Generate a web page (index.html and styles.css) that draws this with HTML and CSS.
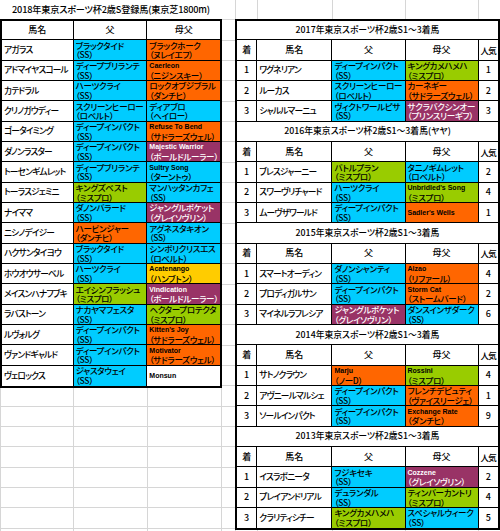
FILE: index.html
```html
<!DOCTYPE html>
<html lang="ja">
<head>
<meta charset="utf-8">
<title>2018年東京スポーツ杯2歳S登録馬</title>
<link rel="stylesheet" href="styles.css">
</head>
<body>
<div class="sheet">
  <div class="left">
    <div class="left-title">2018年東京スポーツ杯2歳S登録馬(東京芝1800m)</div>
    <table class="reg">
      <colgroup><col class="lw1"><col class="lw2"><col class="lw3"></colgroup>
      <tr class="hd"><th>馬名</th><th>父</th><th>母父</th></tr>
      <tr><td class="nm">アガラス</td><td class="s c"><div>ブラックタイド<br>（SS）</div></td><td class="s o"><div>ブラックホーク<br>（ヌレイエフ）</div></td></tr>
      <tr><td class="nm">アドマイヤスコール</td><td class="s c"><div>ディープブリランテ<br>（SS）</div></td><td class="s o"><div><span class="en">Caerleon</span><br>（ニジンスキー）</div></td></tr>
      <tr><td class="nm">カテドラル</td><td class="s c"><div>ハーツクライ<br>（SS）</div></td><td class="s o"><div>ロックオブジブラル<br>（ダンチヒ）</div></td></tr>
      <tr><td class="nm">クリノガウディー</td><td class="s c"><div>スクリーンヒーロー<br>（ロベルト）</div></td><td class="s c"><div>ディアブロ<br>（ヘイロー）</div></td></tr>
      <tr><td class="nm">ゴータイミング</td><td class="s c"><div>ディープインパクト<br>（SS）</div></td><td class="s o"><div><span class="en">Refuse To Bend</span><br>（サドラーズウェル）</div></td></tr>
      <tr><td class="nm">ダノンラスター</td><td class="s c"><div>ディープインパクト<br>（SS）</div></td><td class="s p"><div><span class="en">Majestic Warrior</span><br>（ボールドルーラー）</div></td></tr>
      <tr><td class="nm">トーセンギムレット</td><td class="s c"><div>ディープブリランテ<br>（SS）</div></td><td class="s c"><div><span class="en">Sultry Song</span><br>（ターントゥ）</div></td></tr>
      <tr><td class="nm">トーラスジェミニ</td><td class="s g"><div>キングズベスト<br>（ミスプロ）</div></td><td class="s c"><div>マンハッタンカフェ<br>（SS）</div></td></tr>
      <tr><td class="nm">ナイママ</td><td class="s c"><div>ダノンバラード<br>（SS）</div></td><td class="s p"><div>ジャングルポケット<br>（グレイソヴリン）</div></td></tr>
      <tr><td class="nm">ニシノデイジー</td><td class="s o"><div>ハービンジャー<br>（ダンチヒ）</div></td><td class="s c"><div>アグネスタキオン<br>（SS）</div></td></tr>
      <tr><td class="nm">ハクサンタイヨウ</td><td class="s c"><div>ブラックタイド<br>（SS）</div></td><td class="s c"><div>シンボリクリスエス<br>（ロベルト）</div></td></tr>
      <tr><td class="nm">ホウオウサーベル</td><td class="s c"><div>ハーツクライ<br>（SS）</div></td><td class="s y"><div><span class="en">Acatenango</span><br>（ハンブトン）</div></td></tr>
      <tr><td class="nm">メイスンハナフブキ</td><td class="s g"><div>エイシンフラッシュ<br>（ミスプロ）</div></td><td class="s p"><div><span class="en">Vindication</span><br>（ボールドルーラー）</div></td></tr>
      <tr><td class="nm">ラバストーン</td><td class="s c"><div>ナカヤマフェスタ<br>（SS）</div></td><td class="s g"><div>ヘクタープロテクタ<br>（ミスプロ）</div></td></tr>
      <tr><td class="nm">ルヴォルグ</td><td class="s c"><div>ディープインパクト<br>（SS）</div></td><td class="s o"><div><span class="en">Kitten's Joy</span><br>（サドラーズウェル）</div></td></tr>
      <tr><td class="nm">ヴァンドギャルド</td><td class="s c"><div>ディープインパクト<br>（SS）</div></td><td class="s o"><div><span class="en">Motivator</span><br>（サドラーズウェル）</div></td></tr>
      <tr class="last"><td class="nm">ヴェロックス</td><td class="s c"><div>ジャスタウェイ<br>（SS）</div></td><td class="s one w"><div><span class="en">Monsun</span></div></td></tr>
    </table>
  </div>
  <div class="right">
    <table class="res">
      <colgroup><col class="rw1"><col class="rw2"><col class="rw3"><col class="rw4"><col class="rw5"></colgroup>
      <tr class="ttl"><td colspan="5">2017年東京スポーツ杯2歳S1～3着馬</td></tr>
      <tr class="hd"><th>着</th><th>馬名</th><th>父</th><th>母父</th><th class="pop">人気</th></tr>
      <tr><td class="num">1</td><td class="nm">ワグネリアン</td><td class="s c"><div>ディープインパクト<br>（SS）</div></td><td class="s g"><div>キングカメハメハ<br>（ミスプロ）</div></td><td class="num">1</td></tr>
      <tr><td class="num">2</td><td class="nm">ルーカス</td><td class="s c"><div>スクリーンヒーロー<br>（ロベルト）</div></td><td class="s o"><div>カーネギー<br>（サドラーズウェル）</div></td><td class="num">2</td></tr>
      <tr><td class="num">3</td><td class="nm">シャルルマーニュ</td><td class="s c"><div>ヴィクトワールピサ<br>（SS）</div></td><td class="s p"><div>サクラバクシンオー<br>（プリンスリーギフ）</div></td><td class="num">3</td></tr>

      <tr class="ttl"><td colspan="5">2016年東京スポーツ杯2歳S1～3着馬(ヤヤ)</td></tr>
      <tr class="hd"><th>着</th><th>馬名</th><th>父</th><th>母父</th><th class="pop">人気</th></tr>
      <tr><td class="num">1</td><td class="nm">ブレスジャーニー</td><td class="s g"><div>バトルプラン<br>（ミスプロ）</div></td><td class="s c"><div>タニノギムレット<br>（ロベルト）</div></td><td class="num">2</td></tr>
      <tr><td class="num">2</td><td class="nm">スワーヴリチャード</td><td class="s c"><div>ハーツクライ<br>（SS）</div></td><td class="s g"><div><span class="en">Unbridled's Song</span><br>（ミスプロ）</div></td><td class="num">4</td></tr>
      <tr><td class="num">3</td><td class="nm">ムーヴザワールド</td><td class="s c"><div>ディープインパクト<br>（SS）</div></td><td class="s one o"><div><span class="en">Sadler's Wells</span></div></td><td class="num">1</td></tr>

      <tr class="ttl"><td colspan="5">2015年東京スポーツ杯2歳S1～3着馬</td></tr>
      <tr class="hd"><th>着</th><th>馬名</th><th>父</th><th>母父</th><th class="pop">人気</th></tr>
      <tr><td class="num">1</td><td class="nm">スマートオーディン</td><td class="s c"><div>ダノンシャンティ<br>（SS）</div></td><td class="s o"><div><span class="en">Alzao</span><br>（リファール）</div></td><td class="num">4</td></tr>
      <tr><td class="num">2</td><td class="nm">プロディガルサン</td><td class="s c"><div>ディープインパクト<br>（SS）</div></td><td class="s o"><div><span class="en">Storm Cat</span><br>（ストームバード）</div></td><td class="num">2</td></tr>
      <tr><td class="num">3</td><td class="nm">マイネルラフレシア</td><td class="s p"><div>ジャングルポケット<br>（グレイソヴリン）</div></td><td class="s c"><div>ダンスインザダーク<br>（SS）</div></td><td class="num">6</td></tr>

      <tr class="ttl"><td colspan="5">2014年東京スポーツ杯2歳S1～3着馬</td></tr>
      <tr class="hd"><th>着</th><th>馬名</th><th>父</th><th>母父</th><th class="pop">人気</th></tr>
      <tr><td class="num">1</td><td class="nm">サトノクラウン</td><td class="s o"><div><span class="en">Marju</span><br>（ノーD）</div></td><td class="s g"><div><span class="en">Rossini</span><br>（ミスプロ）</div></td><td class="num">4</td></tr>
      <tr><td class="num">2</td><td class="nm">アヴニールマルシェ</td><td class="s c"><div>ディープインパクト<br>（SS）</div></td><td class="s o"><div>フレンチデピュティ<br>（ヴァイスリージェ）</div></td><td class="num">1</td></tr>
      <tr><td class="num">3</td><td class="nm">ソールインパクト</td><td class="s c"><div>ディープインパクト<br>（SS）</div></td><td class="s o"><div><span class="en">Exchange Rate</span><br>（ダンチヒ）</div></td><td class="num">9</td></tr>

      <tr class="ttl"><td colspan="5">2013年東京スポーツ杯2歳S1～3着馬</td></tr>
      <tr class="hd"><th>着</th><th>馬名</th><th>父</th><th>母父</th><th class="pop">人気</th></tr>
      <tr><td class="num">1</td><td class="nm">イスラボニータ</td><td class="s c"><div>フジキセキ<br>（SS）</div></td><td class="s p"><div><span class="en">Cozzene</span><br>（グレイソヴリン）</div></td><td class="num">2</td></tr>
      <tr><td class="num">2</td><td class="nm">プレイアンドリアル</td><td class="s c"><div>デュランダル<br>（SS）</div></td><td class="s g"><div>ティンバーカントリ<br>（ミスプロ）</div></td><td class="num">4</td></tr>
      <tr class="last"><td class="num">3</td><td class="nm">クラリティシチー</td><td class="s g"><div>キングカメハメハ<br>（ミスプロ）</div></td><td class="s c"><div>スペシャルウィーク<br>（SS）</div></td><td class="num">5</td></tr>
    </table>
  </div>
</div>
</body>
</html>
```

FILE: styles.css
```css
* { box-sizing: border-box; }
html, body { margin: 0; padding: 0; background: #fff; }
body {
  font-family: "Noto Sans CJK JP", "Noto Sans", sans-serif;
  font-feature-settings: "palt";
  font-weight: 500;
  color: #000;
}
.sheet {
  width: 500px;
  height: 531px;
  overflow: hidden;
  display: flex;
  align-items: flex-start;
  background-color: #fff;
  background-image:
    linear-gradient(to right,
      #d6d6d6 0 1px, transparent 1px 73px,
      #d6d6d6 73px 74px, transparent 74px 147px,
      #d6d6d6 147px 148px, transparent 148px 221px,
      #d6d6d6 221px 222px, transparent 222px 235px,
      #d6d6d6 235px 236px, transparent 236px 257px,
      #d6d6d6 257px 258px, transparent 258px 332px,
      #d6d6d6 332px 333px, transparent 333px 405px,
      #d6d6d6 405px 406px, transparent 406px 478px,
      #d6d6d6 478px 479px, transparent 479px),
    repeating-linear-gradient(to bottom,
      transparent 0 19.333px, #d6d6d6 19.333px 20.333px);
}
.left { width: 222px; flex: none; }
.left-title {
  height: 19px;
  background: #fff;
  font-size: 9.2px;
  line-height: 19px;
  text-align: center;
  white-space: nowrap;
  letter-spacing: -0.2px;
}
.right { width: 265px; flex: none; margin-left: 13px; margin-top: 19px; }

table {
  border-collapse: separate;
  border-spacing: 0;
  table-layout: fixed;
  border: 2px solid #000;
  background: #fff;
}
.reg { width: 222px; }
.res { width: 265px; }
col.lw1 { width: 71px; }
col.lw2 { width: 73px; }
col.lw3 { width: 72px; }
col.rw1 { width: 20px; }
col.rw2 { width: 74px; }
col.rw3 { width: 72px; }
col.rw4 { width: 72px; }
col.rw5 { width: 19px; }

td, th {
  border-right: 1px solid #000;
  border-bottom: 1px solid #000;
  padding: 0;
  height: 20.333px;
  overflow: hidden;
  white-space: nowrap;
  font-weight: 500;
}
tr > :last-child { border-right: none; }
tr.last > td { border-bottom: none; }
.reg tr.hd > th { height: 19.333px; }
.res tr:first-child > td { height: 19.333px; }

th {
  font-size: 9px;
  line-height: 12px;
  text-align: center;
  vertical-align: middle;
}
th.pop { font-size: 8.5px; letter-spacing: -0.6px; }
.ttl > td {
  font-size: 8.8px;
  line-height: 12px;
  text-align: center;
  vertical-align: middle;
}
.nm {
  font-size: 8.7px;
  line-height: 12px;
  letter-spacing: -0.8px;
  padding-left: 2px;
  vertical-align: middle;
  text-align: left;
}
.num {
  font-size: 9px;
  line-height: 12px;
  text-align: center;
  vertical-align: middle;
}
.s {
  font-size: 8.5px;
  letter-spacing: -0.3px;
  vertical-align: top;
  text-align: left;
}
.s > div {
  height: 19.333px;
  overflow: hidden;
  line-height: 9.5px;
  padding: 0.5px 0 0 2px;
}
.s.one { vertical-align: middle; }
.s.one > div { line-height: 19.333px; padding-top: 0; }
.en {
  font-family: "Liberation Sans", Arial, sans-serif;
  font-weight: bold;
  font-size: 7px;
  letter-spacing: 0;
  line-height: 9.5px;
  vertical-align: top;
}
.s.one .en { line-height: 19.333px; }
.c { background: #00ccff; }
.o { background: #ff6600; }
.g { background: #99cc00; }
.p { background: #993366; color: #fff; }
.y { background: #ffcc00; }
.w { background: #fff; }
```
